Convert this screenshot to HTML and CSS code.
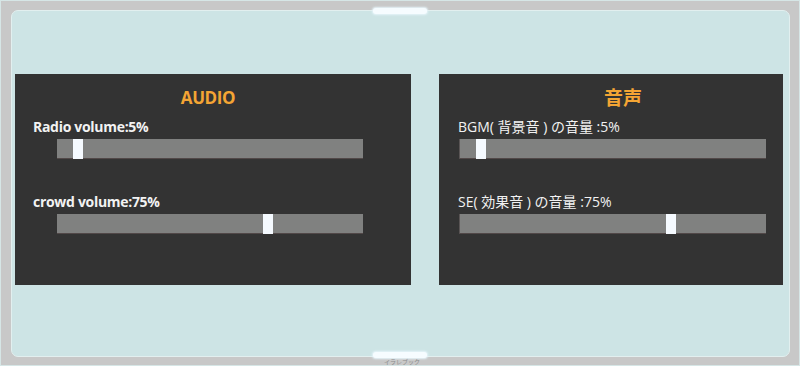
FILE: index.html
```html
<!DOCTYPE html>
<html lang="ja">
<head>
  <meta charset="UTF-8" />
  <meta name="viewport" content="width=device-width, initial-scale=1.0"/>
  <title>Sound Settings</title>
  <link rel="stylesheet" href="styles.css">
</head>
<body>

  <div class="frame">
    <div class="pill pill-top"></div>

    <div class="screen">
      <div class="panels">

        <div class="panel panel-en">
          <h2 class="title">AUDIO</h2>

          <div class="setting first">
            <p class="label">Radio volume:5%</p>
            <div class="track"><div class="thumb" style="left:16px"></div></div>
          </div>

          <div class="setting">
            <p class="label">crowd volume:75%</p>
            <div class="track"><div class="thumb" style="left:206px"></div></div>
          </div>
        </div>

        <div class="panel panel-ja">
          <h2 class="title">音声</h2>

          <div class="setting first">
            <p class="label">BGM( 背景音 ) の音量 :5%</p>
            <div class="track"><div class="thumb" style="left:16px"></div></div>
          </div>

          <div class="setting">
            <p class="label">SE( 効果音 ) の音量 :75%</p>
            <div class="track"><div class="thumb" style="left:206px"></div></div>
          </div>
        </div>

      </div>
    </div>

    <div class="pill pill-bottom"></div>
    <span class="credit">イラレブック</span>
  </div>

</body>
</html>
```

FILE: styles.css
```css
body {
  margin: 0;
  background-color: #c8c8c8;
  font-family: "Open Sans", "Noto Sans CJK JP", sans-serif;
}

.frame {
  position: relative;
  height: 366px;
  box-sizing: border-box;
  padding: 9px 9px 8px 10px;
  border: 1px solid #d6e6e6;
}

.screen {
  height: 347px;
  box-sizing: border-box;
  background-color: #cde4e5;
  border: 1px solid #e2efef;
  border-radius: 7px;
}

.panels {
  display: flex;
  gap: 28px;
  padding: 63px 0 0 3px;
}

.panel {
  height: 211px;
  box-sizing: border-box;
  background-color: #333333;
  padding-top: 12px;
}

.panel-en {
  width: 396px;
  padding-left: 18px;
}

.panel-ja {
  width: 344px;
  padding-left: 19px;
}

.title {
  margin: 0;
  text-align: center;
  font-size: 17px;
  line-height: 24px;
  font-weight: 700;
  color: #f4a534;
}

.panel-en .title {
  padding-right: 28px;
  letter-spacing: -0.4px;
}

.panel-ja .title {
  padding-left: 5px;
  font-size: 19px;
}

.setting {
  margin-top: 34px;
}

.setting.first {
  margin-top: 8px;
}

.label {
  margin: 0 0 3px;
  font-size: 14px;
  line-height: 18px;
  color: #f2f2f2;
}

.panel-en .label {
  font-weight: 700;
  letter-spacing: -0.3px;
}

.track {
  position: relative;
  width: 306px;
  height: 20px;
  box-sizing: border-box;
  background-color: #808180;
  border-bottom: 1px solid #514848;
}

.panel-en .track {
  margin-left: 24px;
}

.panel-ja .track {
  margin-left: 1px;
  width: 307px;
  border-left: 1px solid #5a5555;
}

.thumb {
  position: absolute;
  top: 0;
  width: 10px;
  height: 20px;
  background-color: #f5faff;
}

.pill {
  position: absolute;
  left: 372px;
  width: 54px;
  height: 6px;
  border-radius: 3px;
  background-color: #f6fcff;
  box-shadow: 0 0 2px 1px #e6f4fa;
}

.pill-top {
  top: 7px;
}

.pill-bottom {
  top: 351px;
}

.credit {
  position: absolute;
  left: 383px;
  top: 357px;
  font-size: 6px;
  line-height: 8px;
  color: #8a8a8a;
}
```
